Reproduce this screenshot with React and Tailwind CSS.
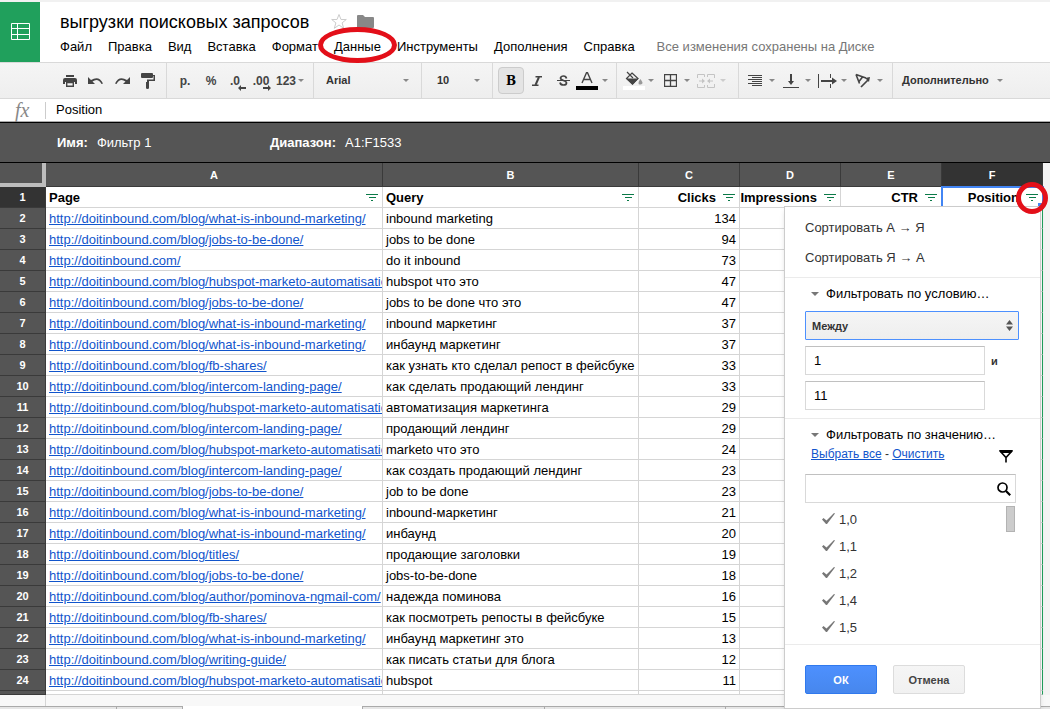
const BLOG = 'http://doitinbound.com/blog';

const MENU = ['Файл', 'Правка', 'Вид', 'Вставка', 'Формат', 'Данные', 'Инструменты', 'Дополнения', 'Справка'];

const COLUMNS = [
  { letter: 'A', title: 'Page', width: 'w-[337px]' },
  { letter: 'B', title: 'Query', width: 'w-[256px]' },
  { letter: 'C', title: 'Clicks', width: 'w-[101px]', numeric: true },
  { letter: 'D', title: 'Impressions', width: 'w-[101px]', numeric: true },
  { letter: 'E', title: 'CTR', width: 'w-[101px]', numeric: true },
  { letter: 'F', title: 'Position', width: 'w-[101px]', numeric: true, active: true },
];

const ROWS = [
  [`${BLOG}/what-is-inbound-marketing/`, 'inbound marketing', 134],
  [`${BLOG}/jobs-to-be-done/`, 'jobs to be done', 94],
  ['http://doitinbound.com/', 'do it inbound', 73],
  [`${BLOG}/hubspot-marketo-automatisation/`, 'hubspot что это', 47],
  [`${BLOG}/jobs-to-be-done/`, 'jobs to be done что это', 47],
  [`${BLOG}/what-is-inbound-marketing/`, 'inbound маркетинг', 37],
  [`${BLOG}/what-is-inbound-marketing/`, 'инбаунд маркетинг', 37],
  [`${BLOG}/fb-shares/`, 'как узнать кто сделал репост в фейсбуке', 33],
  [`${BLOG}/intercom-landing-page/`, 'как сделать продающий лендинг', 33],
  [`${BLOG}/hubspot-marketo-automatisation/`, 'автоматизация маркетинга', 29],
  [`${BLOG}/intercom-landing-page/`, 'продающий лендинг', 29],
  [`${BLOG}/hubspot-marketo-automatisation/`, 'marketo что это', 24],
  [`${BLOG}/intercom-landing-page/`, 'как создать продающий лендинг', 23],
  [`${BLOG}/jobs-to-be-done/`, 'job to be done', 23],
  [`${BLOG}/what-is-inbound-marketing/`, 'inbound-маркетинг', 21],
  [`${BLOG}/what-is-inbound-marketing/`, 'инбаунд', 20],
  [`${BLOG}/titles/`, 'продающие заголовки', 19],
  [`${BLOG}/jobs-to-be-done/`, 'jobs-to-be-done', 18],
  [`${BLOG}/author/pominova-ngmail-com/`, 'надежда поминова', 16],
  [`${BLOG}/fb-shares/`, 'как посмотреть репосты в фейсбуке', 15],
  [`${BLOG}/what-is-inbound-marketing/`, 'инбаунд маркетинг это', 13],
  [`${BLOG}/writing-guide/`, 'как писать статьи для блога', 12],
  [`${BLOG}/hubspot-marketo-automatisation/`, 'hubspot', 11],
];

const VALUES = ['1,0', '1,1', '1,2', '1,4', '1,5'];

function Caret({ className = 'h-[3px] w-1.5 text-[#888]' }) {
  return (
    <svg className={`shrink-0 ${className}`} viewBox="0 0 6 3" fill="currentColor">
      <path d="M0 0h6L3 3z" />
    </svg>
  );
}

function FilterLines() {
  return (
    <svg width="12" height="7" viewBox="0 0 12 7" fill="#0b7a48" shapeRendering="crispEdges">
      <path d="M0 0h12v1H0zM3 3h7v1H3zM5 6h2v1H5z" />
    </svg>
  );
}

function ToolIcon({ w = 16, h = 16, children }) {
  return (
    <svg width={w} height={h} viewBox={`0 0 ${w} ${h}`} fill="none" stroke="#444" strokeWidth="1">
      {children}
    </svg>
  );
}

function ToolButton({ label, active, children }) {
  return (
    <button
      type="button"
      aria-label={label}
      className={`flex h-[27px] w-[26px] items-center justify-center rounded-sm text-[12px] font-bold text-[#444] ${
        active ? 'border border-[#ccc] bg-[#e4e4e4]' : ''
      }`}
    >
      {children}
    </button>
  );
}

function DropButton({ label, disabled, children }) {
  return (
    <button type="button" aria-label={label} disabled={disabled} className="flex h-[27px] w-9 items-center">
      <span className="flex w-7 justify-center">{children}</span>
      <Caret className={disabled ? 'h-[3px] w-1.5 text-[#ccc]' : 'h-[3px] w-1.5 text-[#888]'} />
    </button>
  );
}

function ToolGroup({ className = '', children }) {
  return <div className={`flex shrink-0 items-center border-r border-[#d9d9d9] ${className}`}>{children}</div>;
}

function ToolSelect({ label, value, className }) {
  return (
    <div className="relative flex w-full items-center">
      <select
        aria-label={label}
        defaultValue={value}
        className={`h-[27px] w-full appearance-none bg-transparent text-[11px] font-bold text-[#333] ${className}`}
      >
        <option>{value}</option>
      </select>
      <span className="pointer-events-none absolute inset-y-0 right-3 flex items-center">
        <Caret />
      </span>
    </div>
  );
}

function Header() {
  return (
    <header className="flex h-[62px] shrink-0 border-t-2 border-[#f1f1f1]">
      <div className="flex w-10 shrink-0 items-center justify-center bg-[#20a05c] pb-0.5">
        <svg width="19" height="17" viewBox="0 0 19 17" fill="none" stroke="#fff">
          <path d="M.5.5h18v16H.5zM6.500.5v16M.5 5.500h18M.5 11.500h18" />
        </svg>
      </div>
      <div className="min-w-0 flex-1 pl-5">
        <div className="flex h-[35px] items-center gap-[9px] pt-1">
          <h1 className="mr-3 text-[18px] leading-6 text-black">выгрузки поисковых запросов</h1>
          <button type="button" aria-label="Пометить">
            <svg width="18" height="17" viewBox="0 0 18 17" fill="none" stroke="#ccc">
              <path d="M9 1.500l2 5h5.300l-4.200 3.400 1.600 5.400L9 12l-4.700 3.300 1.600-5.400L1.700 6.500H7z" />
            </svg>
          </button>
          <button type="button" aria-label="Переместить в папку">
            <svg width="17" height="13" viewBox="0 0 17 13" fill="#888">
              <path d="M0 1q0-1 1-1h5l2 2h8q1 0 1 1v9q0 1-1 1H1q-1 0-1-1z" />
            </svg>
          </button>
        </div>
        <nav className="flex items-center gap-4 whitespace-nowrap text-[13px] leading-5 text-black">
          {MENU.map((item) => (
            <button key={item} type="button" className="relative">
              {item}
              {item === 'Данные' && (
                <span className="absolute -inset-x-4 -top-2.5 -bottom-1.5 z-20 rounded-[50%] border-[5px] border-[#e30f19]" />
              )}
            </button>
          ))}
          <span className="ml-1.5 text-[#777]">Все изменения сохранены на Диске</span>
        </nav>
      </div>
    </header>
  );
}

function Toolbar() {
  return (
    <div className="flex h-[37px] shrink-0 border-y border-[#d9d9d9] bg-linear-to-b from-[#f5f5f5] to-[#eee]">
      <ToolGroup className="w-[167px] pl-[57px]">
        <ToolButton label="Печать">
          <svg width="14" height="12" viewBox="0 0 14 12" fill="#444">
            <path d="M3 0h8v2H3zM2 3h10q2 0 2 2v4h-2V7H2v2H0V5q0-2 2-2z" />
            <path d="M3.700 7.500h6.600v3.800H3.700z" fill="#f5f5f5" stroke="#444" strokeWidth="1.400" />
          </svg>
        </ToolButton>
        <ToolButton label="Отменить">
          <svg width="16" height="8" viewBox="0 0 16 8" fill="#444">
            <path d="M0 0v7h7L4.500 4.500Q10 .5 13.500 7L15 6.500Q11-2 3 3z" />
          </svg>
        </ToolButton>
        <ToolButton label="Повторить">
          <svg width="16" height="8" viewBox="0 0 16 8" fill="#444">
            <path d="M16 0v7H9l2.500-2.500Q6 .5 2.500 7L1 6.500Q5-2 13 3z" />
          </svg>
        </ToolButton>
        <ToolButton label="Копировать форматирование">
          <svg width="14" height="16" viewBox="0 0 14 16" fill="#444">
            <path d="M1 0h10q1 0 1 1v3q0 1-1 1H1Q0 5 0 4V1q0-1 1-1z" />
            <path d="M12 2h2v6H8v2H6V6.500h6.500V3H12zM5 9h3v6q0 1-1.500 1T5 15z" />
          </svg>
        </ToolButton>
      </ToolGroup>

      <ToolGroup className="w-[147px] pl-[5px]">
        <ToolButton>р.</ToolButton>
        <ToolButton>%</ToolButton>
        <ToolButton label="Уменьшить число знаков после запятой">
          <span className="relative -ml-1">
            .0
            <svg className="absolute top-[13px] left-2" width="8" height="6" viewBox="0 0 8 6" fill="#444">
              <path d="M3 0v2h5v2H3v2L0 3z" />
            </svg>
          </span>
        </ToolButton>
        <ToolButton label="Увеличить число знаков после запятой">
          <span className="relative -ml-1">
            .00
            <svg className="absolute top-[13px] left-2.5" width="8" height="6" viewBox="0 0 8 6" fill="#444">
              <path d="M5 0v2H0v2h5v2l3-3z" />
            </svg>
          </span>
        </ToolButton>
        <button type="button" className="flex items-center gap-0.5 text-[12px] font-bold text-[#444]">
          123
          <Caret />
        </button>
      </ToolGroup>

      <ToolGroup className="w-[108px]">
        <ToolSelect label="Шрифт" value="Arial" className="pl-3" />
      </ToolGroup>
      <ToolGroup className="w-[71px]">
        <ToolSelect label="Размер шрифта" value="10" className="pl-[15px]" />
      </ToolGroup>

      <ToolGroup className="w-[124px] pl-[5px]">
        <ToolButton label="Полужирный" active>
          <span className="font-['DejaVu_Serif'] text-[12px] text-black">B</span>
        </ToolButton>
        <ToolButton label="Курсив">
          <ToolIcon w={10} h={10}>
            <path d="M3.500.8H10M0 9.200h6.500" strokeWidth="1.500" />
            <path d="M7 1L3.500 9" strokeWidth="2" />
          </ToolIcon>
        </ToolButton>
        <ToolButton label="Зачёркнутый">
          <ToolIcon w={13} h={11}>
            <path d="M9.500 3.500Q9 1 6.500 1T3.500 3q0 1.500 3 2.500t3 2.500q0 2-3 2T3 7.500" strokeWidth="1.700" />
            <path d="M0 5.500h13" />
          </ToolIcon>
        </ToolButton>
        <button type="button" aria-label="Цвет текста" className="flex items-center gap-1">
          <svg width="22" height="18" viewBox="0 0 22 18" fill="none" stroke="#444">
            <path d="M6 11L10.500.8h1L16 11M8 7.500h6" strokeWidth="1.400" />
            <path d="M0 14h22v4H0z" fill="#000" stroke="none" />
          </svg>
          <Caret />
        </button>
      </ToolGroup>

      <ToolGroup className="w-[122px] pl-[3px]">
        <DropButton label="Цвет заливки">
          <svg width="22" height="19" viewBox="0 0 22 19" fill="none" stroke="#444">
            <path d="M4 1l6 6M9 2l6 5.500-5.500 5.500L3.500 7.500z" strokeWidth="1.200" />
            <path d="M3 7.500h12.500L9.500 14z" fill="#444" stroke="none" />
            <path d="M17.500 8q2 3 2 4t-2 1.500-2-1.500 2-4z" fill="#999" stroke="none" />
            <path d="M0 15h22v4H0z" fill="#fff" stroke="none" />
          </svg>
        </DropButton>
        <DropButton label="Границы">
          <ToolIcon w={13} h={13}>
            <path d="M.5.5h12v12H.5zM6.500 0v13M0 6.500h13" strokeWidth="1.300" />
          </ToolIcon>
        </DropButton>
        <DropButton label="Объединить ячейки" disabled>
          <svg width="18" height="14" viewBox="0 0 18 14" fill="none" stroke="#c4c4c4">
            <path d="M7.500 3V.5h-7V4M.5 10v3.500h7V11M10.500 3V.5h7V4M17.500 10v3.500h-7V11M2 7h4M16 7h-4" />
            <path d="M5 4.500L8 7 5 9.500zM13 4.500L10 7l3 2.500z" fill="#c4c4c4" stroke="none" />
          </svg>
        </DropButton>
      </ToolGroup>

      <ToolGroup className="w-[154px] pl-0.5">
        <DropButton label="Выравнивание по горизонтали">
          <ToolIcon w={14} h={11}>
            <path d="M0 .5h14M4 2.500h10M0 4.500h14M4 6.500h10M0 8.500h14M4 10.500h10" />
          </ToolIcon>
        </DropButton>
        <DropButton label="Выравнивание по вертикали">
          <ToolIcon w={16} h={14}>
            <path d="M0 13.500h16" />
            <path d="M8 0v8" strokeWidth="2" />
            <path d="M5 7h6l-3 4z" fill="#444" stroke="none" />
          </ToolIcon>
        </DropButton>
        <DropButton label="Перенос текста">
          <ToolIcon w={19} h={14}>
            <path d="M.5 0v14M12.500 0v4M12.500 10v4" />
            <path d="M3 7h12" strokeWidth="2" />
            <path d="M14 3.500L19 7l-5 3.500z" fill="#444" stroke="none" />
          </ToolIcon>
        </DropButton>
        <DropButton label="Поворот текста">
          <ToolIcon w={16} h={15}>
            <path d="M1 1.500l10 3.500M1 1.500l3.500 9M4 8.500l3.500-4.500" strokeWidth="1.600" />
            <path d="M6 14l7-7" strokeWidth="1.700" />
            <path d="M10 5l5-1-1 5z" fill="#444" stroke="none" />
          </ToolIcon>
        </DropButton>
      </ToolGroup>

      <button type="button" className="flex items-center gap-2 pl-[9px] text-[11px] font-bold text-[#333]">
        Дополнительно
        <Caret />
      </button>
    </div>
  );
}

function FormulaBar() {
  return (
    <div className="flex h-[23px] shrink-0 items-center border-b border-[#aaa] bg-white">
      <label
        htmlFor="formula"
        className="w-[45px] pl-[15px] font-['Liberation_Serif'] text-[20px] leading-5 text-[#888] italic"
      >
        fx
      </label>
      <input
        id="formula"
        defaultValue="Position"
        className="h-[17px] min-w-0 flex-1 border-l border-[#ccc] pl-2.5 text-[13px] text-black outline-none"
      />
    </div>
  );
}

function FilterBar() {
  return (
    <div className="flex h-[41px] shrink-0 items-center border-y border-black bg-[#555] pl-[57px] text-[13px] text-white">
      <p className="flex w-[213px] gap-[9px]">
        <b>Имя:</b>
        <span>Фильтр 1</span>
      </p>
      <p className="flex gap-[9px]">
        <b>Диапазон:</b>
        <span>A1:F1533</span>
      </p>
    </div>
  );
}

function SectionTitle({ children }) {
  return (
    <button type="button" className="flex h-8 items-center gap-[7px] pl-[26px] text-[13px] text-black">
      <Caret className="h-1 w-2 text-[#777]" />
      {children}
    </button>
  );
}

function FilterMenu() {
  const field = 'h-[29px] border border-[#d9d9d9] border-t-[#c0c0c0] bg-white px-2 text-[13px] text-black outline-none';

  return (
    <div className="absolute top-[19px] right-px z-10 flex w-[257px] flex-col border border-[#ccc] bg-white text-left font-normal text-[#333] shadow-md">
      <div className="flex flex-col border-b border-[#ebebeb] pt-[6px] pb-[4px]">
        <button type="button" className="h-[30px] pl-5 text-left text-[13px]">Сортировать А → Я</button>
        <button type="button" className="h-[30px] pl-5 text-left text-[13px]">Сортировать Я → А</button>
      </div>

      <section className="border-b border-[#ebebeb] pb-2">
        <SectionTitle>Фильтровать по условию…</SectionTitle>
        <div className="flex flex-col gap-1.5 pt-px pr-[21px] pl-5">
          <div className="relative">
            <select
              aria-label="Условие"
              defaultValue="Между"
              className="h-[29px] w-full appearance-none rounded-[1px] border border-[#4d90fe] bg-linear-to-b from-[#f5f5f5] to-[#eee] px-1.5 text-[11px] font-bold text-[#333] outline-none"
            >
              <option>Между</option>
            </select>
            <svg className="pointer-events-none absolute top-[9px] right-1.5" width="7" height="11" viewBox="0 0 7 11" fill="#555">
              <path d="M0 4.500h7L3.500 0zM0 6.500h7L3.500 11z" />
            </svg>
          </div>
          <div className="flex items-center gap-1.5">
            <input aria-label="От" defaultValue="1" className={`w-[180px] ${field}`} />
            <span className="text-[11px] font-bold">и</span>
          </div>
          <input aria-label="До" defaultValue="11" className={`w-[180px] ${field}`} />
        </div>
      </section>

      <section className="border-b border-[#ebebeb] pb-[3px]">
        <SectionTitle>Фильтровать по значению…</SectionTitle>
        <div className="-mt-1.5 flex h-[29px] justify-between pt-px pr-[27px] pl-[26px] text-[12px] leading-4">
          <p>
            <a href="#all" className="text-[#15c] underline">Выбрать все</a>
            {' - '}
            <a href="#clear" className="text-[#15c] underline">Очистить</a>
          </p>
          <svg className="mt-1" width="14" height="13" viewBox="0 0 14 13" fill="none" stroke="#000" strokeWidth="1.600">
            <path d="M1.500 1.500h11L7 7.500zM7 7v5.500" />
            <path d="M0 0h14l-2 3H2z" fill="#000" stroke="none" />
          </svg>
        </div>
        <div className="relative pr-6 pl-5">
          <input type="search" aria-label="Поиск значений" className={`w-full ${field}`} />
          <svg className="absolute top-2 right-[29px]" width="14" height="14" viewBox="0 0 14 14" fill="none" stroke="#000">
            <circle cx="5.500" cy="5.500" r="4.500" strokeWidth="1.700" />
            <path d="M9 9l4.200 4.200" strokeWidth="2.200" />
          </svg>
        </div>
        <div className="flex justify-between pt-[3px] pr-[25px] pl-[37px]">
          <ul>
            {VALUES.map((value) => (
              <li key={value}>
                <label className="flex h-[27px] items-center gap-1 text-[13px]">
                  <span className="grid">
                    <input type="checkbox" defaultChecked className="peer col-start-1 row-start-1 size-[13px] appearance-none" />
                    <svg
                      className="pointer-events-none invisible col-start-1 row-start-1 peer-checked:visible"
                      width="13"
                      height="11"
                      viewBox="0 0 13 11"
                      fill="#777"
                    >
                      <path d="M0 6.500L1.500 5l3 2.500L12 0l1 .5L5 11H4z" />
                    </svg>
                  </span>
                  {value}
                </label>
              </li>
            ))}
          </ul>
          <div className="h-[26px] w-[9px] border border-[#b3b3b3] bg-[#ccc]" />
        </div>
      </section>

      <div className="flex gap-4 pt-5 pb-3.5 pl-5 text-[11px] font-bold">
        <button type="button" className="h-[29px] w-[72px] rounded-xs border border-[#3079ed] bg-linear-to-b from-[#4d90fe] to-[#4787ed] text-white">
          ОК
        </button>
        <button type="button" className="h-[29px] w-[72px] rounded-xs border border-[#dcdcdc] bg-linear-to-b from-[#f5f5f5] to-[#f1f1f1] text-[#444]">
          Отмена
        </button>
      </div>
    </div>
  );
}

function TitleCell({ column }) {
  return (
    <th
      className={`relative h-[21px] border-r border-b border-[#d5d5d5] p-0 ${
        column.active ? 'outline-2 -outline-offset-1 outline-[#4285f4]' : ''
      }`}
    >
      <div className="flex items-center justify-between gap-[7px] pt-px pr-1 text-[13px] leading-[19px] font-bold">
        <span className={column.numeric ? 'flex-1 text-right' : 'pl-[3px]'}>{column.title}</span>
        <button type="button" aria-label={`Фильтр: ${column.title}`} className="relative shrink-0">
          <FilterLines />
          {column.active && (
            <span className="absolute top-1/2 left-1/2 z-20 size-8 -translate-1/2 rounded-full border-[5px] border-[#e30f19]" />
          )}
        </button>
      </div>
      {column.active && <span className="absolute -right-0.5 -bottom-0.5 size-1.5 bg-[#4285f4]" />}
      {column.active && <FilterMenu />}
    </th>
  );
}

function Sheet() {
  const rowHead = 'border-r border-b border-[#3a3a3a] bg-[#555] p-0 text-center text-[11px] font-bold text-white';
  const cell = 'overflow-hidden border-r border-b border-[#d5d5d5] p-0 px-[3px] whitespace-nowrap';
  const dataCell = `${cell} pt-px leading-[19px]`;

  return (
    <div className="flex shrink-0 bg-[#f3f3f3]">
      <table className="w-[1043px] shrink-0 table-fixed border-separate border-spacing-0 bg-white text-[13px] leading-5 text-black">
        <colgroup>
          <col className="w-[46px]" />
          {COLUMNS.map((column) => (
            <col key={column.letter} className={column.width} />
          ))}
        </colgroup>
        <thead>
          <tr className="h-6 text-[11px] text-white">
            <th className="border-r-4 border-b-4 border-[#bdbdbd] bg-[#555] p-0" />
            {COLUMNS.map(({ letter, active }) => (
              <th key={letter} className={`border-r border-b border-[#3a3a3a] p-0 ${active ? 'bg-[#333]' : 'bg-[#555]'}`}>
                {letter}
              </th>
            ))}
          </tr>
          <tr>
            <th className="border-r border-b border-[#3a3a3a] bg-[#333] p-0 text-[11px] text-white">1</th>
            {COLUMNS.map((column) => (
              <TitleCell key={column.letter} column={column} />
            ))}
          </tr>
        </thead>
        <tbody>
          {ROWS.map(([page, query, clicks], index) => (
            <tr key={query} className="h-[21px]">
              <th className={rowHead}>{index + 2}</th>
              <td className={dataCell}>
                <a href={page} className="text-[#15c] underline">{page}</a>
              </td>
              <td className={dataCell}>{query}</td>
              <td className={`${dataCell} text-right`}>{clicks}</td>
              <td className={cell} />
              <td className={cell} />
              <td className={`${cell} border-r-[#20a05c]`} />
            </tr>
          ))}
          <tr className="h-1">
            <th className={rowHead} />
            <td className={cell} />
            <td className={cell} />
            <td className={cell} />
            <td className={cell} />
            <td className={cell} />
            <td className={`${cell} border-r-[#20a05c]`} />
          </tr>
        </tbody>
      </table>
    </div>
  );
}

function SheetTabs() {
  return (
    <footer className="min-h-0 flex-1 bg-[#f8f8f8]">
      <div className="h-[11px] pl-[45px]">
        <div className="h-full border-l border-[#d5d5d5]" />
      </div>
      <div className="flex h-8">
        <div className="w-[117px] border-t border-r border-[#aaa] bg-[#e6e6e6]" />
        <div className="w-[66px] border-t border-r border-[#aaa] bg-[#e6e6e6]" />
        <div className="w-[179px] bg-white" />
        <div className="w-[183px] border-t border-x border-[#aaa] bg-[#e6e6e6]" />
        <div className="w-[181px] border-t border-r border-[#aaa] bg-[#e6e6e6]" />
        <div className="flex-1 border-t border-[#aaa] bg-[#e6e6e6]" />
      </div>
    </footer>
  );
}

export default function App() {
  return (
    <div className="flex h-screen flex-col overflow-hidden bg-white font-['Liberation_Sans',Arial,sans-serif]">
      <Header />
      <Toolbar />
      <FormulaBar />
      <FilterBar />
      <Sheet />
      <SheetTabs />
    </div>
  );
}
